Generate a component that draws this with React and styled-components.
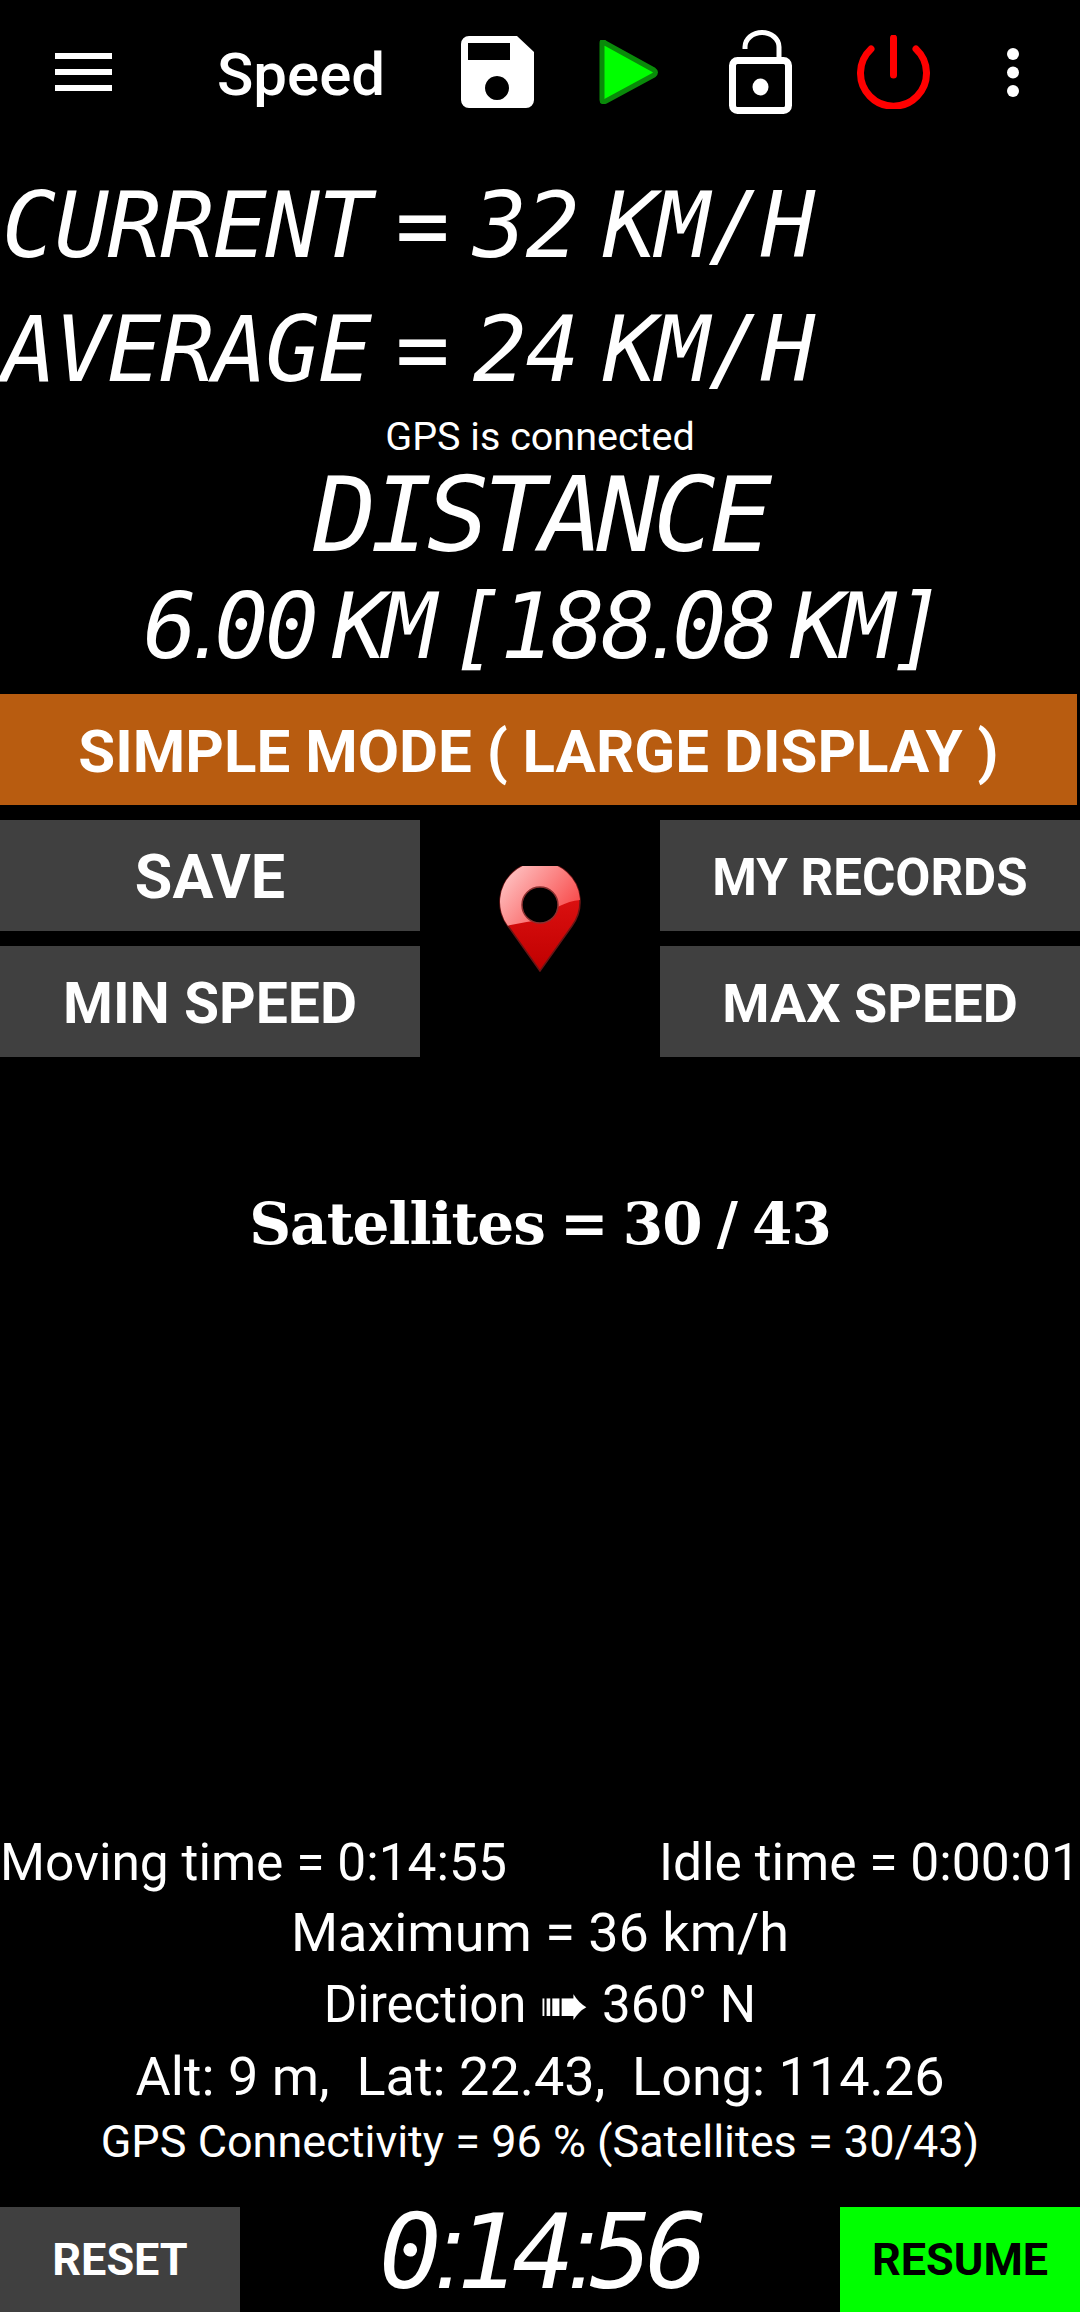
import React from "react";
import styled, { createGlobalStyle } from "styled-components";

const GlobalStyle = createGlobalStyle`
  html, body {
    margin: 0;
    padding: 0;
    background: #000;
  }
`;

const Page = styled.div`
  width: 1080px;
  height: 2312px;
  background: #000;
  color: #fff;
  font-family: Roboto, "Noto Sans", sans-serif;
  display: flex;
  flex-direction: column;
  overflow: hidden;
`;

const Toolbar = styled.div`
  height: 144px;
  padding-bottom: 3px;
  flex: none;
  display: flex;
  align-items: center;
  padding-left: 55px;
`;

const Menu = styled.div`
  width: 57px;
  height: 38px;
  display: flex;
  flex-direction: column;
  justify-content: space-between;
  margin-right: 105px;
  span {
    display: block;
    height: 6px;
    background: #fff;
  }
`;

const Title = styled.div`
  font-size: 60px;
  font-weight: 500;
  width: 244px;
  margin-top: 5px;
`;

const ToolIcon = styled.svg`
  display: block;
  flex: none;
  margin-left: ${(p) => p.gap}px;
`;

const Lcd = styled.div`
  font-family: "DejaVu Sans Mono", monospace;
  font-style: oblique;
  font-size: ${(p) => p.size}px;
  line-height: ${(p) => p.lh}px;
  height: ${(p) => p.lh}px;
  margin-top: ${(p) => p.top || 0}px;
  letter-spacing: ${(p) => p.ls}px;
  word-spacing: ${(p) => p.ws || 0}px;
  text-align: ${(p) => p.align || "center"};
  padding-left: ${(p) => p.pad || 0}px;
  white-space: nowrap;
`;

// dots and colons sit in a narrow font, they take little room on the display
const Narrow = styled.span`
  font-family: "Liberation Sans", sans-serif;
`;

const Status = styled.div`
  margin-top: 2px;
  font-size: 39.5px;
  line-height: 46px;
  height: 46px;
  text-align: center;
`;

const Banner = styled.div`
  box-sizing: border-box;
  width: 1077px;
  height: 111px;
  margin-top: 31px;
  padding-top: 3px;
  background: #b85c10;
  font-size: 60px;
  font-weight: 700;
  display: flex;
  align-items: center;
  justify-content: center;
`;

const ButtonGrid = styled.div`
  margin-top: 15px;
  display: grid;
  grid-template-columns: 420px 240px 420px;
  grid-template-rows: 111px 111px;
  row-gap: 15px;
`;

const GreyButton = styled.div`
  background: #404040;
  padding-top: 3px;
  font-size: ${(p) => p.size}px;
  font-weight: 700;
  display: flex;
  align-items: center;
  justify-content: center;
`;

const PinCell = styled.div`
  grid-column: 2;
  grid-row: 1 / span 2;
  display: flex;
  justify-content: center;
  padding-top: 46px;
`;

const Satellites = styled.div`
  margin-top: 127px;
  font-family: "DejaVu Serif", serif;
  font-weight: 700;
  font-size: 58px;
  line-height: 80px;
  letter-spacing: -1px;
  word-spacing: -4px;
  text-align: center;
`;

const Stats = styled.div`
  margin-top: auto;
  display: flex;
  flex-direction: column;
`;

const StatRow = styled.div`
  font-size: ${(p) => p.size || 54}px;
  line-height: ${(p) => p.lh || 72}px;
  height: ${(p) => p.lh || 72}px;
  display: flex;
  justify-content: ${(p) => (p.split ? "space-between" : "center")};
  white-space: pre;
`;

const Arrow = styled.span`
  font-family: "DejaVu Sans", sans-serif;
  font-size: 60px;
`;

const BottomBar = styled.div`
  height: 105px;
  margin-top: 36px;
  flex: none;
  display: grid;
  grid-template-columns: 240px 600px 240px;
`;

const BottomButton = styled.div`
  background: ${(p) => p.bg};
  color: ${(p) => p.fg};
  font-size: 45px;
  font-weight: 700;
  display: flex;
  align-items: center;
  justify-content: center;
`;

const Save = () => (
  <ToolIcon gap={0} width="73" height="72" viewBox="0 0 73 72">
    <path fillRule="evenodd" fill="#fff" d="M8 0H56L73 16V64a8 8 0 0 1-8 8H8a8 8 0 0 1-8-8V8a8 8 0 0 1 8-8ZM7 7V24H49V7ZM36 40a12 12 0 1 0 .01 0Z" />
  </ToolIcon>
);

const Play = () => (
  <ToolIcon gap={65} width="59" height="64" viewBox="0 0 59 64">
    <path d="M3 3Q3 0 6 3L55 30Q58 32 55 35L7 61Q3 63 3 60Z" fill="#00ff00" stroke="#0a8a0a" strokeWidth="5" strokeLinejoin="round" />
  </ToolIcon>
);

const Lock = () => (
  <ToolIcon gap={71} width="63" height="84" viewBox="0 0 63 84">
    <path d="M16 19V17A17 14.500 0 0 1 50 17V28" fill="none" stroke="#fff" strokeWidth="5" />
    <rect x="3.500" y="30.500" width="56" height="50" rx="5" fill="none" stroke="#fff" strokeWidth="7" />
    <ellipse cx="31.500" cy="57" rx="8" ry="8.500" fill="#fff" />
  </ToolIcon>
);

const Power = () => (
  <ToolIcon gap={65} width="73" height="74" viewBox="0 0 73 74">
    <path d="M14 14A33 33 0 1 0 59 14" fill="none" stroke="#ff0000" strokeWidth="7" strokeLinecap="round" />
    <path d="M36.500 3V40" fill="none" stroke="#ff0000" strokeWidth="7" strokeLinecap="round" />
  </ToolIcon>
);

const Dots = () => (
  <ToolIcon gap={77} width="12" height="49" viewBox="0 0 12 49">
    <circle cx="6" cy="6" r="6" fill="#fff" />
    <circle cx="6" cy="24.500" r="6" fill="#fff" />
    <circle cx="6" cy="43" r="6" fill="#fff" />
  </ToolIcon>
);

const Pin = () => (
  <svg width="82" height="106" viewBox="0 0 82 106">
    <defs>
      <linearGradient id="pinTop" x1="0" y1="0" x2="1" y2="0.6">
        <stop offset="0" stopColor="#ffd0d0" />
        <stop offset="1" stopColor="#f84a4a" />
      </linearGradient>
      <linearGradient id="pinBottom" x1="0" y1="0" x2="0" y2="1">
        <stop offset="0" stopColor="#e81818" />
        <stop offset="1" stopColor="#c00000" />
      </linearGradient>
      <clipPath id="pinClip">
        <path d="M41 105 9 60A40 40 0 1 1 73 60Z" />
      </clipPath>
    </defs>
    <path d="M41 105 9 60A40 40 0 1 1 73 60Z" fill="url(#pinBottom)" stroke="#6a1515" strokeWidth="1.500" />
    <path d="M0 0H82V34Q60 36 41 54Q25 56 7 60L0 60Z" fill="url(#pinTop)" clipPath="url(#pinClip)" />
    <circle cx="41" cy="39" r="18" fill="#000" stroke="#8a3030" strokeWidth="1.500" />
  </svg>
);

const App = () => {
  return (
    <Page>
      <GlobalStyle />
      <Toolbar>
        <Menu>
          <span />
          <span />
          <span />
        </Menu>
        <Title>Speed</Title>
        <Save />
        <Play />
        <Lock />
        <Power />
        <Dots />
      </Toolbar>
      <Lcd size={90} lh={124} top={17} ls={-1.5} ws={-28} align="left" pad={2}>CURRENT = 32 KM/H</Lcd>
      <Lcd size={90} lh={124} ls={-1.5} ws={-28} align="left" pad={2}>AVERAGE = 24 KM/H</Lcd>
      <Status>GPS is connected</Status>
      <Lcd size={104} lh={94} top={8} ls={-6}>DISTANCE</Lcd>
      <Lcd size={90} lh={72} top={29} ls={-3.9} ws={-33} pad={4}>
        6<Narrow>.</Narrow>00 KM [188<Narrow>.</Narrow>08 KM]
      </Lcd>
      <Banner>SIMPLE MODE ( LARGE DISPLAY )</Banner>
      <ButtonGrid>
        <GreyButton size={61}>SAVE</GreyButton>
        <PinCell>
          <Pin />
        </PinCell>
        <GreyButton size={51}>MY RECORDS</GreyButton>
        <GreyButton size={57}>MIN SPEED</GreyButton>
        <GreyButton size={54}>MAX SPEED</GreyButton>
      </ButtonGrid>
      <Satellites>Satellites = 30 / 43</Satellites>
      <Stats>
        <StatRow split size={51.5} lh={68}>
          <span>Moving time = 0:14:55</span>
          <span>Idle time = 0:00:01</span>
        </StatRow>
        <StatRow>Maximum = 36 km/h</StatRow>
        <StatRow size={51}>
          Direction <Arrow>➠</Arrow> 360° N
        </StatRow>
        <StatRow>Alt: 9 m,  Lat: 22.43,  Long: 114.26</StatRow>
        <StatRow size={45} lh={58}>GPS Connectivity = 96 % (Satellites = 30/43)</StatRow>
      </Stats>
      <BottomBar>
        <BottomButton bg="#404040" fg="#fff">RESET</BottomButton>
        <Lcd size={104} lh={90} ls={-7}>
          0<Narrow>:</Narrow>14<Narrow>:</Narrow>56
        </Lcd>
        <BottomButton bg="#00ff00" fg="#000">RESUME</BottomButton>
      </BottomBar>
    </Page>
  );
};

export default App;
